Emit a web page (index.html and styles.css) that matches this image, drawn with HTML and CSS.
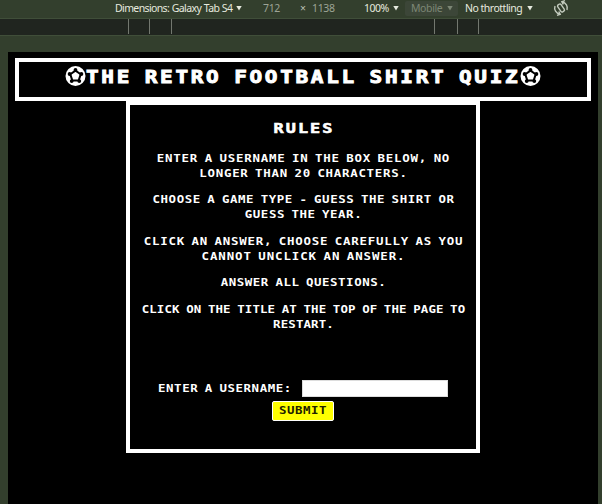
FILE: index.html
```html
<!DOCTYPE html>
<html lang="en">
<head>
<meta charset="utf-8">
<title>The Retro Football Shirt Quiz</title>
<link rel="stylesheet" href="styles.css">
</head>
<body>
<div class="toolbar">
  <span class="device">Dimensions: Galaxy Tab S4</span><i class="arrow"></i>
  <span class="num width">712</span><span class="times">×</span><span class="num height">1138</span>
  <span class="zoom">100%</span><i class="arrow"></i>
  <span class="mobile">Mobile<i class="arrow"></i></span>
  <span class="throttle">No throttling</span><i class="arrow"></i>
  <svg class="rotate" viewBox="0 0 16 16" fill="none" stroke="#c3cbbd" stroke-width="1.4"><rect x="6" y="3.800" width="4" height="8.400" rx="1.500" transform="rotate(-35 8 8)"/><path d="M2 6C.8 9.500 3 13.500 7 14.200M4 15.300l3.200-1-1.400-2.800M14 10C15.200 6.500 13 2.500 9 1.800M12 .7l-3.200 1 1.400 2.800"/></svg>
</div>
<div class="ruler">
  <i class="tick t1"></i><i class="tick t2"></i><i class="tick t3"></i><i class="tick t4"></i><i class="tick t5"></i><i class="tick t6"></i>
</div>
<main class="page">
  <header class="banner">
    <svg class="ball" viewBox="0 0 20 20"><circle cx="10" cy="10" r="10" fill="#fff"/><path d="M10 4.600l5.200 3.700-2 6.100H6.800l-2-6.100z" fill="none" stroke="#000" stroke-width="2"/><g fill="#000"><circle cx="10" cy="4" r="1.900"/><circle cx="15.900" cy="8" r="1.900"/><circle cx="13.800" cy="15.100" r="1.900"/><circle cx="6.200" cy="15.100" r="1.900"/><circle cx="4.100" cy="8" r="1.900"/></g></svg>
    <h1>THE RETRO FOOTBALL SHIRT QUIZ</h1>
    <svg class="ball" viewBox="0 0 20 20"><circle cx="10" cy="10" r="10" fill="#fff"/><path d="M10 4.600l5.200 3.700-2 6.100H6.800l-2-6.100z" fill="none" stroke="#000" stroke-width="2"/><g fill="#000"><circle cx="10" cy="4" r="1.900"/><circle cx="15.900" cy="8" r="1.900"/><circle cx="13.800" cy="15.100" r="1.900"/><circle cx="6.200" cy="15.100" r="1.900"/><circle cx="4.100" cy="8" r="1.900"/></g></svg>
  </header>
  <section class="panel">
    <h2>RULES</h2>
    <p><span class="line a">ENTER A USERNAME IN THE BOX BELOW, NO</span><span class="line b">LONGER THAN 20 CHARACTERS.</span></p>
    <p><span class="line c">CHOOSE A GAME TYPE - GUESS THE SHIRT OR</span><span class="line d">GUESS THE YEAR.</span></p>
    <p><span class="line e">CLICK AN ANSWER, CHOOSE CAREFULLY AS YOU</span><span class="line f">CANNOT UNCLICK AN ANSWER.</span></p>
    <p><span class="line d">ANSWER ALL QUESTIONS.</span></p>
    <p><span class="line g">CLICK ON THE TITLE AT THE TOP OF THE PAGE TO</span><span class="line h">RESTART.</span></p>
    <form>
      <div class="field"><label class="line c" for="user">ENTER A USERNAME:</label><input id="user" type="text"></div>
      <button type="button"><span class="line d">SUBMIT</span></button>
    </form>
  </section>
</main>
</body>
</html>
```
FILE: styles.css
```css
* { box-sizing: border-box; }
body {
  margin: 0;
  height: 504px;
  overflow: hidden;
  background: #333f2d;
  color: #fff;
  font-family: "DejaVu Sans Mono", monospace;
}

/* Device toolbar */
.toolbar {
  display: flex;
  align-items: center;
  height: 18px;
  padding: 0 0 2px 115px;
  color: #e6eadf;
  font: 10.5px/16px "Noto Sans", sans-serif;
  white-space: nowrap;
}
.toolbar span { flex: none; }
.arrow {
  flex: none;
  width: 6px;
  height: 5px;
  background: currentColor;
  clip-path: polygon(0 0, 100% 0, 50% 100%);
}
.device { width: 121px; letter-spacing: -0.62px; word-spacing: 0.5px; }
.num { color: #9da496; letter-spacing: -0.35px; }
.width { width: 37px; margin-left: 21px; }
.times { width: 12px; color: #b7beb0; }
.height { width: 52px; }
.zoom { width: 29px; letter-spacing: -0.5px; }
.mobile {
  display: flex;
  align-items: center;
  justify-content: space-between;
  width: 53px;
  height: 15px;
  margin: 0 7px 0 6px;
  padding: 0 5px 0 6px;
  border-radius: 2px;
  background: #3c4638;
  color: #7c8675;
  letter-spacing: -0.4px;
}
.throttle { width: 62px; letter-spacing: -0.5px; }
.rotate { flex: none; width: 16px; height: 16px; margin-left: 20px; }

.ruler {
  display: flex;
  height: 18px;
  border: solid #404e39;
  border-width: 1px 0;
  background: #20251f;
}
.tick { width: 1px; height: 15px; background: #73786f; }
.t1 { margin-left: 128px; }
.t2 { margin-left: 20px; }
.t3 { margin-left: 21px; }
.t4 { margin-left: 262px; }
.t5 { margin-left: 22px; }
.t6 { margin-left: 20px; }

/* Quiz page */
.page {
  width: 590px;
  height: 452px;
  margin: 16px 0 0 8px;
  padding: 6px 7px 0;
  background: #000;
}
.banner {
  display: flex;
  justify-content: center;
  height: 43px;
  padding-top: 4px;
  border: 4px solid #fff;
}
.ball { flex: none; width: 21px; height: 20px; }
h1 {
  width: 434px;
  margin: 0;
  font-size: 17.5px;
  line-height: 23px;
  letter-spacing: 2.25px;
  word-spacing: -2.2px;
  white-space: nowrap;
  transform: scaleX(1.2);
  transform-origin: left;
  -webkit-text-stroke: 0.9px #fff;
}
.panel {
  width: 354px;
  height: 352px;
  margin-left: 111px;
  padding-top: 15px;
  border: 4px solid #fff;
  text-align: center;
}
h2 {
  margin: 0 0 15px 2px;
  font-size: 14px;
  line-height: 16px;
  letter-spacing: 1.75px;
  transform: scaleX(1.2);
  -webkit-text-stroke: 0.6px #fff;
}
p { margin: 0 0 11.4px 1px; }
.line {
  display: block;
  font-size: 10.8px;
  font-weight: bold;
  line-height: 15px;
  letter-spacing: var(--track);
  word-spacing: calc(-0.8px - var(--track));
  white-space: nowrap;
  transform: scaleX(1.15);
}
.a { --track: 0.67px; }
.b { --track: 0.63px; }
.c { --track: 0.5px; }
.d { --track: 0.47px; }
.e { --track: 0.66px; }
.f { --track: 0.78px; }
.g { --track: 0.1px; }
.h { --track: 0.12px; }
form { margin-top: 48px; }
.field {
  display: flex;
  align-items: center;
  height: 17px;
  padding-left: 28px;
}
label { width: 144px; text-align: left; }
label.line { transform-origin: left; }
input {
  position: relative;
  width: 146px;
  height: 17px;
  padding: 0;
  border: 1px solid #ddd;
  background: #fff;
}
button {
  display: block;
  width: 62px;
  height: 20px;
  margin: 4px 0 0 142px;
  padding: 0;
  border: 1px solid #fff;
  border-radius: 2px;
  background: #ff0;
  color: #222200;
  font-family: inherit;
}
button .line { line-height: 18px; }
```
